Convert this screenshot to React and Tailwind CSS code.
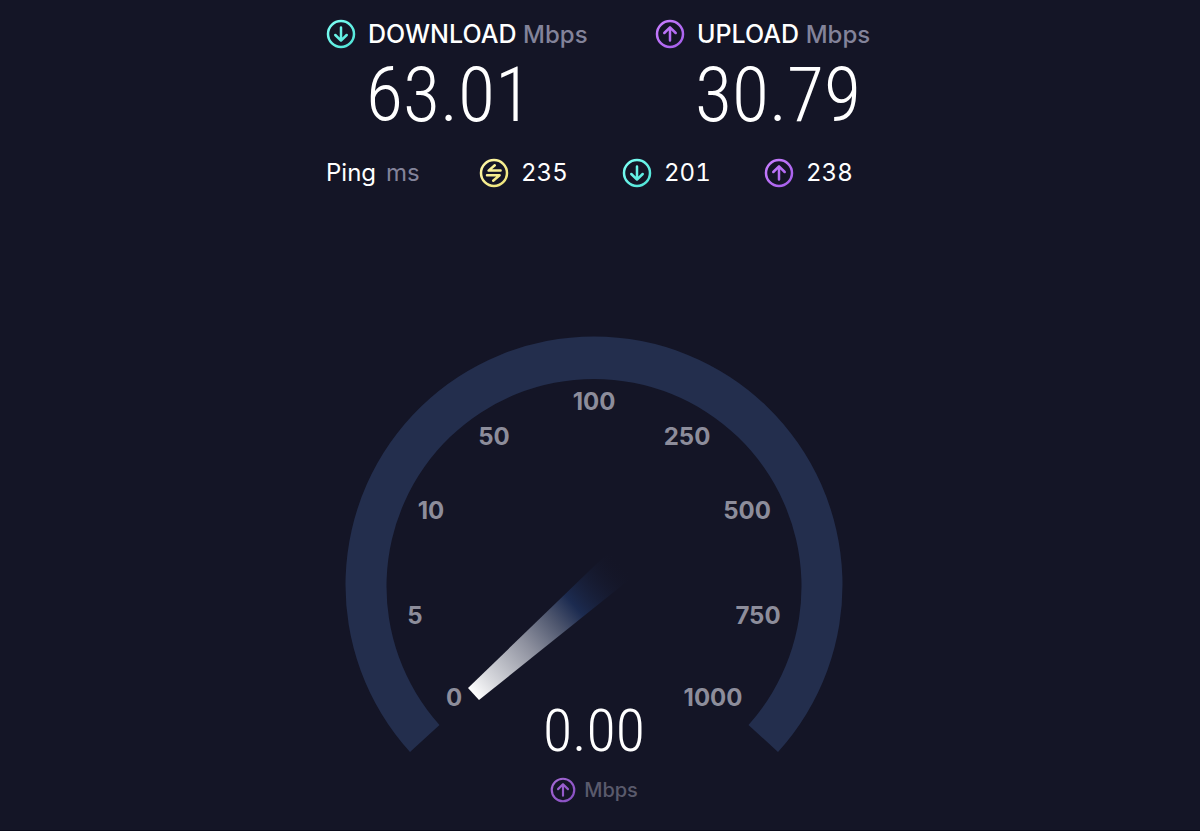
const GRADIENTS = {
  down: ['#7dfff5', '#4fe3d6'],
  up: ['#c87dff', '#a55eea'],
  ping: ['#fff8a6', '#eee47a'],
};

const GLYPHS = {
  down: 'M15 8.5V21.5M9.3 16L15 21.7L20.7 16',
  up: 'M15 21.5V8.5M9.3 14L15 8.3L20.7 14',
  ping: 'M15.8 7.2L9.6 12.6H21.6M8 17.2H20.6L14.2 22.8',
};

function RoundIcon({ kind, id, className }) {
  const [from, to] = GRADIENTS[kind];
  return (
    <svg viewBox="0 0 30 30" fill="none" aria-hidden="true" className={className}>
      <defs>
        <linearGradient id={id} gradientUnits="userSpaceOnUse" x1="3" y1="3" x2="27" y2="27">
          <stop offset="0" stopColor={from} />
          <stop offset="1" stopColor={to} />
        </linearGradient>
      </defs>
      <circle cx="15" cy="15" r="13" stroke={`url(#${id})`} strokeWidth="2.5" />
      <path d={GLYPHS[kind]} stroke={`url(#${id})`} strokeWidth="2.5" strokeLinecap="round" strokeLinejoin="round" />
    </svg>
  );
}

const DISPLAY = "font-['Roboto_Condensed','Liberation_Sans_Narrow',sans-serif] font-light text-white";

function Result({ kind, label, value }) {
  return (
    <section>
      <h2 className="flex h-9 items-center gap-3 text-[25px] font-medium whitespace-nowrap">
        <RoundIcon kind={kind} id={`result-${kind}`} className="size-[30px] shrink-0" />
        <span className="pt-0.5">
          {label} <span className="text-2xl text-[#83839a]">Mbps</span>
        </span>
      </h2>
      <p className={`${DISPLAY} pt-1 pl-10 text-[76px] leading-[78px]`}>{value}</p>
    </section>
  );
}

function Latency({ kind, value }) {
  return (
    <div className="flex items-center gap-3">
      <RoundIcon kind={kind} id={`latency-${kind}`} className="size-[30px] shrink-0" />
      <span className="tabular-nums">{value}</span>
    </div>
  );
}

const TICKS = [
  { label: '0', x: 109, y: 370 },
  { label: '5', x: 70, y: 288 },
  { label: '10', x: 86, y: 183 },
  { label: '50', x: 149, y: 109 },
  { label: '100', x: 249, y: 74 },
  { label: '250', x: 342, y: 109 },
  { label: '500', x: 402, y: 183 },
  { label: '750', x: 413, y: 288 },
  { label: '1000', x: 368, y: 370 },
];

function Gauge() {
  return (
    <svg viewBox="0 0 498 416" className="block h-auto w-full overflow-visible" role="img" aria-label="Speed gauge">
      <defs>
        <linearGradient id="needle" gradientUnits="userSpaceOnUse" x1="128" y1="358" x2="278" y2="229">
          <stop offset="0" stopColor="#ffffff" />
          <stop offset="0.12" stopColor="#d6d7dc" />
          <stop offset="0.37" stopColor="#8d909e" />
          <stop offset="0.55" stopColor="#4e566e" />
          <stop offset="0.68" stopColor="#1c2b50" />
          <stop offset="1" stopColor="#141526" stopOpacity="0" />
        </linearGradient>
      </defs>
      <path d="M65 416A248.5 248.5 0 1 1 433 416L403.5 389A207.5 207.5 0 1 0 94.5 389Z" fill="#232e4d" />
      <path d="M123 352L134 364L300 231L270 210Z" fill="url(#needle)" />
      <g fill="#8d8d9b" textAnchor="middle" className="text-2xl font-bold">
        {TICKS.map((t) => (
          <text key={t.label} x={t.x} y={t.y}>
            {t.label}
          </text>
        ))}
      </g>
    </svg>
  );
}

export default function App() {
  return (
    <main className="min-h-screen border-b border-[#0a0b1a] bg-[#141526] pt-4 pr-1.5 font-['Inter',sans-serif] text-white">
      <div className="mx-auto w-full max-w-[542px]">
        <div className="grid grid-cols-[329px_1fr]">
          <Result kind="down" label="DOWNLOAD" value="63.01" />
          <Result kind="up" label="UPLOAD" value="30.79" />
        </div>
        <div className="mt-6 grid grid-cols-[153px_143px_142px_1fr] items-center text-2xl leading-7 whitespace-nowrap">
          <h3 className="flex gap-2.5">
            Ping <span className="text-[#83839a]">ms</span>
          </h3>
          <Latency kind="ping" value="235" />
          <Latency kind="down" value="201" />
          <Latency kind="up" value="238" />
        </div>
        <div className="mt-[148px] ml-[19px] max-w-[498px]">
          <Gauge />
          <div className="-mt-14 flex flex-col items-center">
            <p className={`${DISPLAY} text-[60px] leading-[70px]`}>0.00</p>
            <p className="mt-3 flex h-6 items-center gap-2 text-xl font-medium text-[#5a5a6c]">
              <RoundIcon kind="up" id="live-up" className="size-[26px] opacity-80" />
              Mbps
            </p>
          </div>
        </div>
      </div>
    </main>
  );
}
